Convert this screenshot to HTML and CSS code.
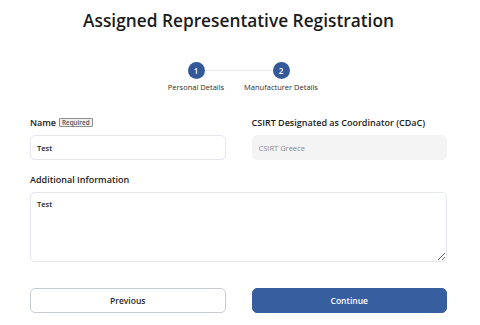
FILE: index.html
```html
<!DOCTYPE html>
<html lang="en">
<head>
  <meta charset="UTF-8" />
  <title>Assigned Representative Registration</title>
  <link rel="stylesheet" href="styles.css">
</head>
<body>
  <div class="page">
    <h1 class="title">Assigned Representative Registration</h1>

    <div class="steps">
      <div class="step">
        <span class="dot">1</span>
        <span class="step-label">Personal Details</span>
      </div>
      <div class="step-line"></div>
      <div class="step">
        <span class="dot">2</span>
        <span class="step-label">Manufacturer Details</span>
      </div>
    </div>

    <div class="form-grid">
      <div class="field">
        <label class="label">Name <span class="badge">Required</span></label>
        <input type="text" class="input" value="Test" />
      </div>
      <div class="field">
        <label class="label">CSIRT Designated as Coordinator (CDaC)</label>
        <input type="text" class="input input-disabled" value="CSIRT Greece" disabled />
      </div>
      <div class="field full">
        <label class="label">Additional Information</label>
        <textarea class="input textarea">Test</textarea>
      </div>
    </div>

    <div class="actions">
      <button class="btn btn-outline">Previous</button>
      <button class="btn btn-primary">Continue</button>
    </div>
  </div>
</body>
</html>
```

FILE: styles.css
```css
body {
  margin: 0;
  font-family: 'Open Sans', sans-serif;
  color: #1f1f1f;
  background: #fff;
}

.page {
  width: 417px;
  margin: 0 0 0 30px;
}

.title {
  margin: 0;
  padding-top: 7px;
  text-align: center;
  font-size: 17.3px;
  font-weight: 600;
  line-height: 28px;
  color: #1b1b1b;
}

.steps {
  display: flex;
  justify-content: center;
  align-items: flex-start;
  margin-top: 27px;
}

.step {
  display: flex;
  flex-direction: column;
  align-items: center;
  width: 17px;
}

.dot {
  width: 17px;
  height: 17px;
  flex-shrink: 0;
  border-radius: 50%;
  background: #34599a;
  color: #fff;
  font-size: 8px;
  font-weight: 600;
  display: flex;
  align-items: center;
  justify-content: center;
}

.step-label {
  margin-top: 3px;
  font-size: 7.5px;
  font-weight: 500;
  color: #2e2e2e;
  white-space: nowrap;
}

.step-line {
  width: 68px;
  height: 1px;
  background: #e8eaee;
  margin-top: 8px;
}

.form-grid {
  display: grid;
  grid-template-columns: 1fr 1fr;
  column-gap: 26px;
  row-gap: 13px;
  margin-top: 24px;
}

.field {
  display: flex;
  flex-direction: column;
}

.full {
  grid-column: 1 / 3;
}

.label {
  font-size: 9px;
  font-weight: 600;
  color: #1a1a1a;
  height: 13px;
  display: flex;
  align-items: center;
  gap: 3px;
  margin-bottom: 6px;
}

.badge {
  font-size: 6.3px;
  font-weight: 600;
  color: #555;
  border: 1px solid #8f8f8f;
  background: #eef0f3;
  padding: 0 2px;
  line-height: 7px;
  border-radius: 1px;
}

.input {
  box-sizing: border-box;
  height: 25px;
  border: 1px solid #e4e7ee;
  border-radius: 5px;
  padding: 0 6px;
  font-family: 'Open Sans', sans-serif;
  font-size: 7.5px;
  font-weight: 600;
  color: #1f1f1f;
  background: #fff;
  outline: none;
}

.input-disabled {
  background: #f4f4f4;
  border-color: #f4f4f4;
  color: #8a8a8a;
  -webkit-text-fill-color: #8a8a8a;
  font-weight: 400;
}

.textarea {
  height: 70px;
  padding: 6px 6px;
  resize: vertical;
}

.actions {
  display: grid;
  grid-template-columns: 1fr 1fr;
  column-gap: 26px;
  margin-top: 26px;
}

.btn {
  height: 25px;
  border-radius: 5px;
  font-family: 'Open Sans', sans-serif;
  font-size: 8.5px;
  font-weight: 600;
  cursor: pointer;
}

.btn-outline {
  background: #fff;
  border: 1px solid #c8ccd3;
  color: #2a2a2a;
}

.btn-primary {
  background: #375e9f;
  border: 1px solid #375e9f;
  color: #fff;
}
```
